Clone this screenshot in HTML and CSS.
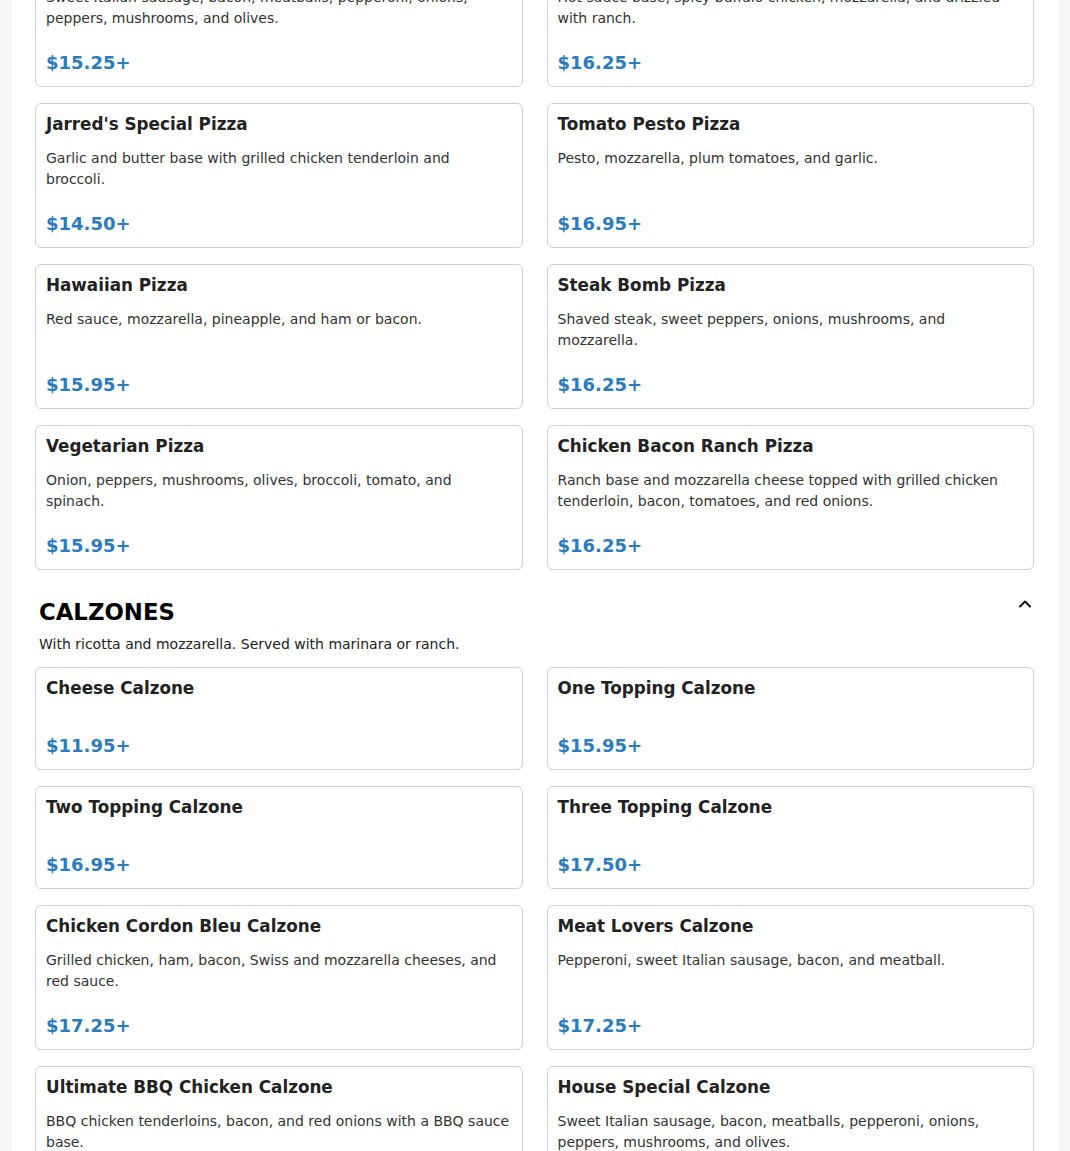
FILE: index.html
```html
<!DOCTYPE html>
<html lang="en">
<head>
<meta charset="utf-8">
<title>Menu</title>
<link rel="stylesheet" href="styles.css">
</head>
<body>
<main class="page">
  <div class="grid grid-first">
    <div class="card">
      <h3 class="card-title">House Special Pizza</h3>
      <p class="card-desc">Sweet Italian sausage, bacon, meatballs, pepperoni, onions, peppers, mushrooms, and olives.</p>
      <div class="card-price">$15.25+</div>
    </div>
    <div class="card">
      <h3 class="card-title">Buffalo Chicken Pizza</h3>
      <p class="card-desc">Hot sauce base, spicy buffalo chicken, mozzarella, and drizzled with ranch.</p>
      <div class="card-price">$16.25+</div>
    </div>
    <div class="card">
      <h3 class="card-title">Jarred's Special Pizza</h3>
      <p class="card-desc">Garlic and butter base with grilled chicken tenderloin and broccoli.</p>
      <div class="card-price">$14.50+</div>
    </div>
    <div class="card">
      <h3 class="card-title">Tomato Pesto Pizza</h3>
      <p class="card-desc">Pesto, mozzarella, plum tomatoes, and garlic.</p>
      <div class="card-price">$16.95+</div>
    </div>
    <div class="card">
      <h3 class="card-title">Hawaiian Pizza</h3>
      <p class="card-desc">Red sauce, mozzarella, pineapple, and ham or bacon.</p>
      <div class="card-price">$15.95+</div>
    </div>
    <div class="card">
      <h3 class="card-title">Steak Bomb Pizza</h3>
      <p class="card-desc">Shaved steak, sweet peppers, onions, mushrooms, and mozzarella.</p>
      <div class="card-price">$16.25+</div>
    </div>
    <div class="card">
      <h3 class="card-title">Vegetarian Pizza</h3>
      <p class="card-desc">Onion, peppers, mushrooms, olives, broccoli, tomato, and spinach.</p>
      <div class="card-price">$15.95+</div>
    </div>
    <div class="card">
      <h3 class="card-title">Chicken Bacon Ranch Pizza</h3>
      <p class="card-desc">Ranch base and mozzarella cheese topped with grilled chicken tenderloin, bacon, tomatoes, and red onions.</p>
      <div class="card-price">$16.25+</div>
    </div>
  </div>

  <section class="section">
    <div class="section-head">
      <h2 class="section-title">CALZONES</h2>
      <svg class="chevron" width="14" height="14" viewBox="0 0 14 14" aria-hidden="true"><path d="M2 9.5 L7 4.5 L12 9.5" fill="none" stroke="#111" stroke-width="2" stroke-linecap="round" stroke-linejoin="round"/></svg>
    </div>
    <p class="section-sub">With ricotta and mozzarella. Served with marinara or ranch.</p>
    <div class="grid">
      <div class="card">
        <h3 class="card-title">Cheese Calzone</h3>
        <p class="card-desc"></p>
        <div class="card-price">$11.95+</div>
      </div>
      <div class="card">
        <h3 class="card-title">One Topping Calzone</h3>
        <p class="card-desc"></p>
        <div class="card-price">$15.95+</div>
      </div>
      <div class="card">
        <h3 class="card-title">Two Topping Calzone</h3>
        <p class="card-desc"></p>
        <div class="card-price">$16.95+</div>
      </div>
      <div class="card">
        <h3 class="card-title">Three Topping Calzone</h3>
        <p class="card-desc"></p>
        <div class="card-price">$17.50+</div>
      </div>
      <div class="card">
        <h3 class="card-title">Chicken Cordon Bleu Calzone</h3>
        <p class="card-desc">Grilled chicken, ham, bacon, Swiss and mozzarella cheeses, and red sauce.</p>
        <div class="card-price">$17.25+</div>
      </div>
      <div class="card">
        <h3 class="card-title">Meat Lovers Calzone</h3>
        <p class="card-desc">Pepperoni, sweet Italian sausage, bacon, and meatball.</p>
        <div class="card-price">$17.25+</div>
      </div>
      <div class="card">
        <h3 class="card-title">Ultimate BBQ Chicken Calzone</h3>
        <p class="card-desc">BBQ chicken tenderloins, bacon, and red onions with a BBQ sauce base.</p>
        <div class="card-price">$17.25+</div>
      </div>
      <div class="card">
        <h3 class="card-title">House Special Calzone</h3>
        <p class="card-desc">Sweet Italian sausage, bacon, meatballs, pepperoni, onions, peppers, mushrooms, and olives.</p>
        <div class="card-price">$17.95+</div>
      </div>
    </div>
  </section>
</main>
</body>
</html>
```

FILE: styles.css
```css
html, body {
  margin: 0;
  padding: 0;
}
body {
  background: #f7f7f7;
  font-family: "DejaVu Sans", sans-serif;
  color: #222;
  overflow: hidden;
}
.page {
  margin: 0 11px;
  background: #fff;
  padding: 0 25px 40px 24px;
  min-height: 1300px;
}
.grid {
  display: grid;
  grid-template-columns: 1fr 1fr;
  column-gap: 24px;
  row-gap: 16px;
}
.grid-first {
  margin-top: -58px;
}
.card {
  border: 1px solid #d0d0d0;
  border-radius: 6px;
  padding: 10px 10px 13px;
  display: flex;
  flex-direction: column;
}
.card-title {
  margin: 0;
  font-size: 16.8px;
  line-height: 21px;
  font-weight: bold;
  color: #222;
}
.card-desc {
  margin: 13px 0 23px;
  font-size: 14px;
  line-height: 21px;
  color: #333;
}
.card-price {
  margin-top: auto;
  font-size: 18px;
  line-height: 21px;
  font-weight: bold;
  color: #2b7bc0;
}
.section {
  margin-top: 28px;
}
.section-head {
  display: flex;
  justify-content: space-between;
  align-items: flex-start;
  padding: 0 4px;
}
.section-title {
  margin: 0;
  font-size: 22.8px;
  line-height: 28px;
  font-weight: bold;
  color: #000;
}
.chevron {
  margin-top: -1px;
  margin-right: -2px;
}
.section-sub {
  margin: 8px 4px 12px;
  font-size: 14px;
  line-height: 21px;
  color: #222;
}
```
